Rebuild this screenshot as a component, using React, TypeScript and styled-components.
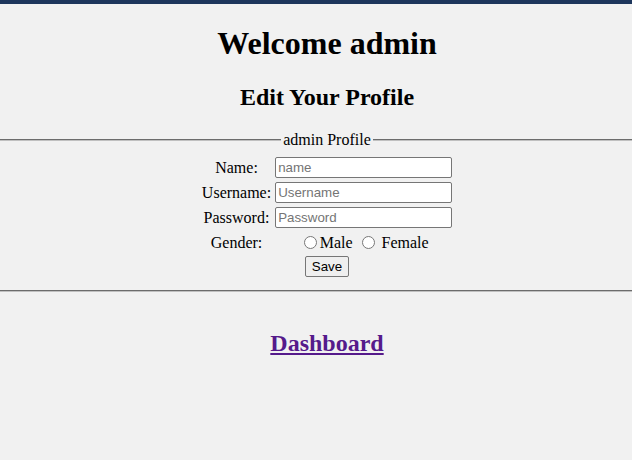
import React, { useState } from 'react';
import styled, { createGlobalStyle } from 'styled-components';

type Gender = 'male' | 'female' | '';

const GlobalStyle = createGlobalStyle`
  html, body { margin:0; padding:0; background:#f1f1f1; overflow:hidden; }
  body { font-family:"Liberation Serif", "Times New Roman", serif; font-size:16px; color:#000; }
`;

const TopBar = styled.div`height:4px; background:#1d365c;`;

// content is centred a little right of the window, as in the original page
const Page = styled.div`width:654px; text-align:center;`;

const Title = styled.h1`font-size:32px; font-weight:bold; margin:21.44px 0;`;
const Subtitle = styled.h2`font-size:24px; font-weight:bold; margin:19.92px 0;`;

const Fieldset = styled.fieldset`
  margin:0; width:654px; box-sizing:border-box;
  border:none; border-top:2px groove #c0c0c0; border-bottom:2px groove #c0c0c0;
  padding:5.6px 12px 10px; min-inline-size:0;
`;
const Legend = styled.legend`margin:0 auto; padding:0 2px; line-height:18px;`;

const Table = styled.table`margin:0 auto; border-spacing:2px;`;
const Cell = styled.td<{ $padTop?: number }>`
  padding:${p => p.$padTop ?? 1}px 1px 1px; text-align:center; vertical-align:middle;
`;

const TextInput = styled.input`
  width:177px; height:21px; box-sizing:border-box; padding:1px 2px;
  border:1px solid #767676; border-radius:2px; background:#fff;
  font-family:"Liberation Sans", Arial, sans-serif; font-size:13.33px;
  display:block;
  &::placeholder{ color:#757575; }
`;

const Radio = styled.input`margin:3px 3px 0 5px; width:13px; height:13px; vertical-align:-1px;`;

const SaveButton = styled.button`
  font-family:"Liberation Sans", Arial, sans-serif; font-size:13.33px;
  padding:1px 6px; height:21px; border:1px solid #767676; border-radius:2px;
  background:#efefef; color:#000;
`;

const LinkHeading = styled.h2`font-size:24px; font-weight:bold; margin:38px 0 0;`;
const DashLink = styled.a`color:#551a8b; text-decoration:underline;`;

export default function App() {
  const [name, setName] = useState('');
  const [username, setUsername] = useState('');
  const [password, setPassword] = useState('');
  const [gender, setGender] = useState<Gender>('');

  return (
    <>
      <GlobalStyle />
      <TopBar />
      <Page>
        <Title>Welcome admin</Title>
        <Subtitle>Edit Your Profile</Subtitle>
        <form onSubmit={e => e.preventDefault()}>
          <Fieldset>
            <Legend>admin Profile</Legend>
            <Table>
              <tbody>
                <tr>
                  <Cell>Name:</Cell>
                  <Cell><TextInput placeholder="name" value={name} onChange={e => setName(e.target.value)} /></Cell>
                </tr>
                <tr>
                  <Cell>Username:</Cell>
                  <Cell><TextInput placeholder="Username" value={username} onChange={e => setUsername(e.target.value)} /></Cell>
                </tr>
                <tr>
                  <Cell>Password:</Cell>
                  <Cell><TextInput type="password" placeholder="Password" value={password} onChange={e => setPassword(e.target.value)} /></Cell>
                </tr>
                <tr>
                  <Cell $padTop={2}>Gender:</Cell>
                  <Cell $padTop={2}>
                    <Radio type="radio" name="gender" checked={gender === 'male'} onChange={() => setGender('male')} />Male{' '}
                    <Radio type="radio" name="gender" checked={gender === 'female'} onChange={() => setGender('female')} /> Female
                  </Cell>
                </tr>
                <tr>
                  <Cell colSpan={2}><SaveButton type="submit">Save</SaveButton></Cell>
                </tr>
              </tbody>
            </Table>
          </Fieldset>
        </form>
        <LinkHeading><DashLink href="#">Dashboard</DashLink></LinkHeading>
      </Page>
    </>
  );
}
